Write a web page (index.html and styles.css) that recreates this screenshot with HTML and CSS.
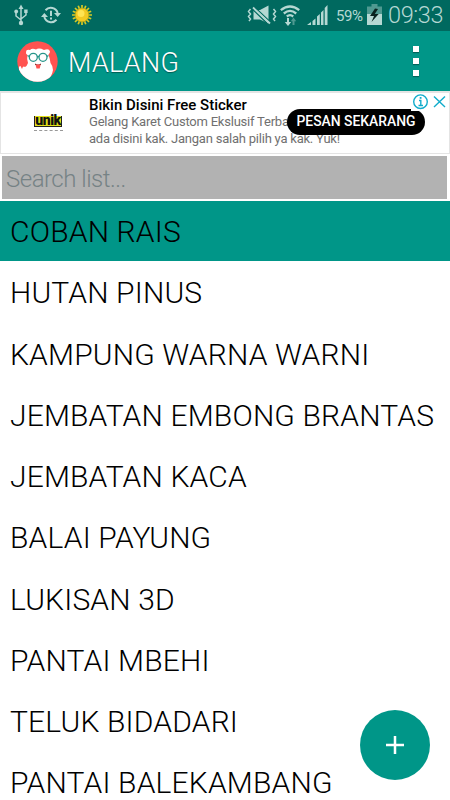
FILE: index.html
```html
<!DOCTYPE html>
<html lang="id">
<head>
<meta charset="utf-8">
<title>Malang</title>
<link rel="stylesheet" href="styles.css">
</head>
<body>
<div class="status">
  <svg class="usb" width="14" height="22" viewBox="0 0 14 22" fill="#b5d8d3" stroke="#b5d8d3"><path d="M7 4V18M2 8V12L7 16M12 7V11L7 15" fill="none" stroke-width="1.5"/><path d="M7 .5L9.5 5H4.5Z" stroke="none"/><circle cx="7" cy="19" r="2.2" stroke="none"/><circle cx="2.2" cy="7.5" r="1.9" stroke="none"/><path d="M10.2 5.5h3.4V9h-3.4Z" stroke="none"/></svg>
  <svg class="sync" width="20" height="18" viewBox="0 0 20 18" fill="none" stroke="#b5d8d3" stroke-width="2"><path d="M4.500 4.200A7.200 7.200 0 0 1 16.700 7M15.500 13.800A7.200 7.200 0 0 1 3.300 11"/><path d="M13 7H20L16.700 11ZM0 11H7L3.300 7Z" fill="#b5d8d3" stroke="none"/><path d="M10 4.800V10M10 11.500V13.500"/></svg>
  <svg class="sun" width="20" height="22" viewBox="0 0 20 22"><g stroke="#d5ca26" stroke-width="1.700"><path d="M10 1V21M0 11H20M3 4L17 18M17 4L3 18M6.200 1.800L13.800 20.200M13.800 1.800L6.200 20.200M.8 7.200L19.200 14.800M.8 14.800L19.200 7.200"/></g><circle cx="10" cy="11" r="7" fill="#f3c923" stroke="#a8a51c"/><circle cx="9" cy="9.500" r="3.500" fill="#ffe453"/></svg>
  <span class="grow"></span>
  <svg class="mute" width="30" height="20" viewBox="0 0 30 20" fill="none" stroke="#b5d8d3" stroke-width="1.500"><path d="M3.500 4L1.500 6.500L3.500 9L1.500 11.500L3.500 14L2 16M26.500 4L28.500 6.500L26.500 9L28.500 11.500L26.500 14L28 16"/><path d="M6.500 5H13L21.500 .5V18.500L13 14.500H6.500Z" fill="#b5d8d3" stroke="none"/><path d="M8 2.500L23 16.800M5 3.800L20 18.200" stroke="#00695f" stroke-width="1.300"/><path d="M6 2.500L23 18.500" stroke-width="1.800"/></svg>
  <svg class="wifi" width="20" height="22" viewBox="0 0 20 22" fill="none" stroke="#b5d8d3" stroke-width="2.300"><path d="M.8 5.200Q10-2.300 19.200 5.200M3.800 8.500Q10 3.300 16.200 8.500M6.800 11.500Q10 8.800 13.200 11.500"/><path d="M8 13V18" stroke-width="2"/><path d="M4.800 17H11.200L8 21Z" fill="#b5d8d3" stroke="none"/><path d="M13.500 20V15" stroke="#4f9991" stroke-width="2"/><path d="M10.800 16.200H16.200L13.500 12.500Z" fill="#4f9991" stroke="none"/></svg>
  <svg class="signal" width="21" height="20" viewBox="0 0 21 20" fill="#b5d8d3"><path d="M0 20L4 17V20ZM5.500 16L8.500 13.500V20H5.500ZM10 11.500L12.800 9V20H10ZM14 7.500L16.500 5V20H14ZM17.700 3L20.500 0V20H17.700Z"/></svg>
  <span class="percent">59%</span>
  <svg class="battery" width="15" height="21" viewBox="0 0 15 21"><path d="M4.500 0H10.500V2.500H15V21H0V2.500H4.500Z" fill="#4f9991"/><path d="M0 10H15V21H0Z" fill="#b5d8d3"/><path d="M8 4.500L3 12H7L4.500 18L11.700 10H7.800L11 5Z" fill="#08231f"/></svg>
  <span class="clock">09:33</span>
</div>
<header class="bar">
  <svg class="avatar" width="41" height="41" viewBox="0 0 41 41"><defs><clipPath id="disc"><circle cx="20.500" cy="20.500" r="20.200"/></clipPath></defs><g clip-path="url(#disc)"><path d="M0 0H41V41H0Z" fill="#ff5350"/><path d="M9 11Q9 8 13 9Q15 7 19 8.500Q22 6.500 27 9Q32 7 33 10.500Q33 12 31.500 13.500Q33 18 33.500 22Q36 25 36 29Q35 35 30 41H8L5 35Q1 32 2 28Q1.500 25 3.500 25L5 28Q6 24.500 8 26Q10 25 11 22Q9.500 18 10.500 14Q8.500 13 9 11Z" fill="#fff"/></g><g fill="none" stroke="#27958a" stroke-width="1.300"><circle cx="16.300" cy="16.300" r="4"/><circle cx="26" cy="16.300" r="4"/><path d="M20.300 16Q21.200 15 22 16M10.500 14.500L12.300 15.500M30 15.500L31.500 14.500"/></g><path d="M18 22.500L20 23.500H22L24 22.500V24H18Z" fill="#62302f"/><path d="M18.500 23.500H23.700L22.700 27.500H19.500Z" fill="#ff5350"/></svg>
  <h1>MALANG</h1>
  <div class="dots"><i></i><i></i><i></i></div>
</header>
<section class="ad">
  <div class="logo"><b>unik</b><small></small></div>
  <div class="copy"><h2>Bikin Disini Free Sticker</h2><p>Gelang Karet Custom Ekslusif Terbaik</p><p>ada disini kak. Jangan salah pilih ya kak. Yuk!</p></div>
  <a class="cta">PESAN SEKARANG</a>
  <svg class="choices" width="38" height="18" viewBox="0 0 38 18"><path d="M0 0H38V18H0Z" fill="#fff"/><g fill="none" stroke="#11accb" stroke-width="1.400"><circle cx="9.500" cy="8.700" r="6.800"/><path d="M8 7.500H9.800V12.500M7.500 12.500H12M23 3.500L34 14M34 3.500L23 14"/></g><path d="M8.700 4H10.500V5.800H8.700Z" fill="#11accb"/></svg>
</section>
<div class="search"><input type="text" placeholder="Search list..."></div>
<ul class="list">
  <li class="active">COBAN RAIS</li>
  <li>HUTAN PINUS</li>
  <li>KAMPUNG WARNA WARNI</li>
  <li>JEMBATAN EMBONG BRANTAS</li>
  <li>JEMBATAN KACA</li>
  <li>BALAI PAYUNG</li>
  <li>LUKISAN 3D</li>
  <li>PANTAI MBEHI</li>
  <li>TELUK BIDADARI</li>
  <li>PANTAI BALEKAMBANG</li>
</ul>
<button class="fab"><svg width="18" height="18" viewBox="0 0 18 18"><path d="M9 0V18M0 9H18" stroke="#fff" stroke-width="2.500"/></svg></button>
</body>
</html>
```
FILE: styles.css
```css
* { box-sizing: border-box; margin: 0; padding: 0; }
body { width: 450px; height: 800px; overflow: hidden; background: #fff; font-family: Roboto, sans-serif; position: relative; }
.status { height: 31px; background: #00695f; display: flex; align-items: flex-start; color: #b5d8d3; }
.status svg { flex: none; }
.usb { margin: 4px 0 0 14px; }
.sync { margin: 6px 0 0 13px; }
.sun { margin: 4px 0 0 11px; }
.grow { flex: 1; }
.mute { margin: 5px 3px 0 0; }
.wifi { margin: 5px 7px 0 0; }
.signal { margin: 5px 8px 0 0; }
.percent { font-size: 15px; line-height: 32px; width: 27px; margin-right: 4px; letter-spacing: -.4px; }
.battery { margin: 4px 7px 0 0; }
.clock { font-size: 23.500px; font-weight: 300; line-height: 31px; width: 62px; margin-left: -1px; letter-spacing: -.4px; white-space: nowrap; }
.bar { height: 60px; background: #009688; display: flex; align-items: center; padding: 0 30px 0 17px; }
h1 { font-size: 27px; font-weight: 300; color: #fff; margin-left: 10px; flex: 1; line-height: 60px; text-shadow: 0 1px 1px #0006; padding-top: 3px; letter-spacing: .3px; }
.dots { display: flex; flex-direction: column; gap: 6px; padding-right: 1px; }
.dots i { width: 6px; height: 6px; background: #fff; box-shadow: 0 1px 1px #0005; }
.ad { height: 63px; border: 1px solid #e4e4e4; border-top-width: 2px; display: flex; position: relative; }
.logo { width: 88px; padding: 23px 0 0 33px; }
.logo b { display: block; width: 28px; height: 11px; background: #e2de18; border: 1px solid #222; border-top: 0; font-size: 14px; line-height: 9px; font-weight: 900; color: #111; text-align: center; letter-spacing: -.4px; }
.logo small { display: block; width: 29px; margin-top: 3px; border-top: 1px dashed #999; }
.copy { white-space: nowrap; padding-top: 3px; }
h2 { font-size: 15px; line-height: 18px; font-weight: 500; color: #000; }
.copy p { font-size: 13px; line-height: 16.500px; color: #707070; letter-spacing: -.22px; }
.cta { position: absolute; left: 286px; top: 16px; width: 138px; height: 26px; border-radius: 13px; background: #000; color: #fff; text-align: center; font-size: 13.900px; line-height: 25px; font-weight: 500; }
.choices { position: absolute; left: 410px; top: 0; }
.search { height: 47px; padding: 2px 2px 2px; }
.search input { display: block; width: 445px; height: 43px; background: #b2b2b2; border: 0; padding: 3px 4px 0; font: 300 24px Roboto, sans-serif; letter-spacing: -.5px; }
.search input::placeholder { color: #768285; opacity: 1; }
.list { list-style: none; }
.list li { height: 61.250px; line-height: 62px; padding-left: 10px; font-size: 30px; letter-spacing: .17px; font-weight: 300; color: #000; white-space: nowrap; }
.list .active { background: linear-gradient(#009688 60px, #fff 60px); }
.fab { position: absolute; left: 360px; top: 710px; width: 70px; height: 70px; border: 0; border-radius: 50%; background: #009688; display: flex; align-items: center; justify-content: center; }
```
